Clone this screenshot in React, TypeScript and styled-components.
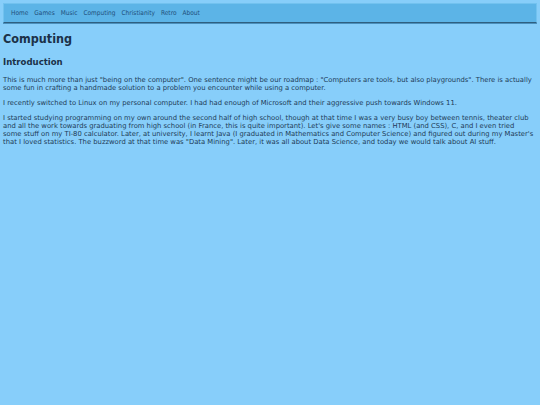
import React from "react";
import styled, { createGlobalStyle } from "styled-components";

const Global = createGlobalStyle`
  html, body { margin: 0; padding: 0; background: #87cefa; }
  body {
    font-family: "DejaVu Sans", Verdana, sans-serif;
    color: #1d3b57;
  }
`;

const Page = styled.div`
  padding: 3px 3px;
  min-height: 399px;
`;

const Nav = styled.nav`
  display: flex;
  align-items: center;
  gap: 6px;
  height: 18px;
  padding: 0 7px;
  background: #5cb4e7;
  border: 1px solid #72c2ef;
  border-bottom: 1px solid #2f5f80;
  box-shadow: 0 1px 0 #4a8fbb;
`;

const NavLink = styled.a`
  font-family: "DejaVu Sans Condensed", "DejaVu Sans", sans-serif;
  font-size: 6.5px;
  color: #1f4f7a;
  text-decoration: none;
`;

const H1 = styled.h1`
  font-family: "DejaVu Sans Condensed", "DejaVu Sans", sans-serif;
  font-size: 12.5px;
  font-weight: bold;
  color: #1b3148;
  margin: 7px 0 0;
  line-height: 18px;
`;

const H2 = styled.h2`
  font-family: "DejaVu Sans Condensed", "DejaVu Sans", sans-serif;
  font-size: 9.5px;
  font-weight: bold;
  color: #1b3148;
  margin: 7px 0 0;
  line-height: 14px;
`;

const P = styled.p`
  font-size: 6.8px;
  line-height: 8px;
  margin: 7px 0 0;
`;

const links = ["Home", "Games", "Music", "Computing", "Christianity", "Retro", "About"];

export default function App() {
  return (
    <>
      <Global />
      <Page>
        <Nav>
          {links.map((l) => (
            <NavLink key={l} href="#">{l}</NavLink>
          ))}
        </Nav>
        <H1>Computing</H1>
        <H2>Introduction</H2>
        <P>
          This is much more than just "being on the computer". One sentence might be our roadmap : "Computers are tools, but also playgrounds". There is actually some fun in crafting a handmade solution to a problem you encounter while using a computer.
        </P>
        <P>
          I recently switched to Linux on my personal computer. I had had enough of Microsoft and their aggressive push towards Windows 11.
        </P>
        <P>
          I started studying programming on my own around the second half of high school, though at that time I was a very busy boy between tennis, theater club and all the work towards graduating from high school (in France, this is quite important). Let's give some names : HTML (and CSS), C, and I even tried some{"\u00a0"}stuff on my TI-80 calculator. Later, at university, I learnt Java (I graduated in Mathematics and Computer Science) and figured out during my Master's that I loved statistics. The buzzword at that time was "Data Mining". Later, it was all about Data Science, and today we would talk about AI stuff.
        </P>
      </Page>
    </>
  );
}
